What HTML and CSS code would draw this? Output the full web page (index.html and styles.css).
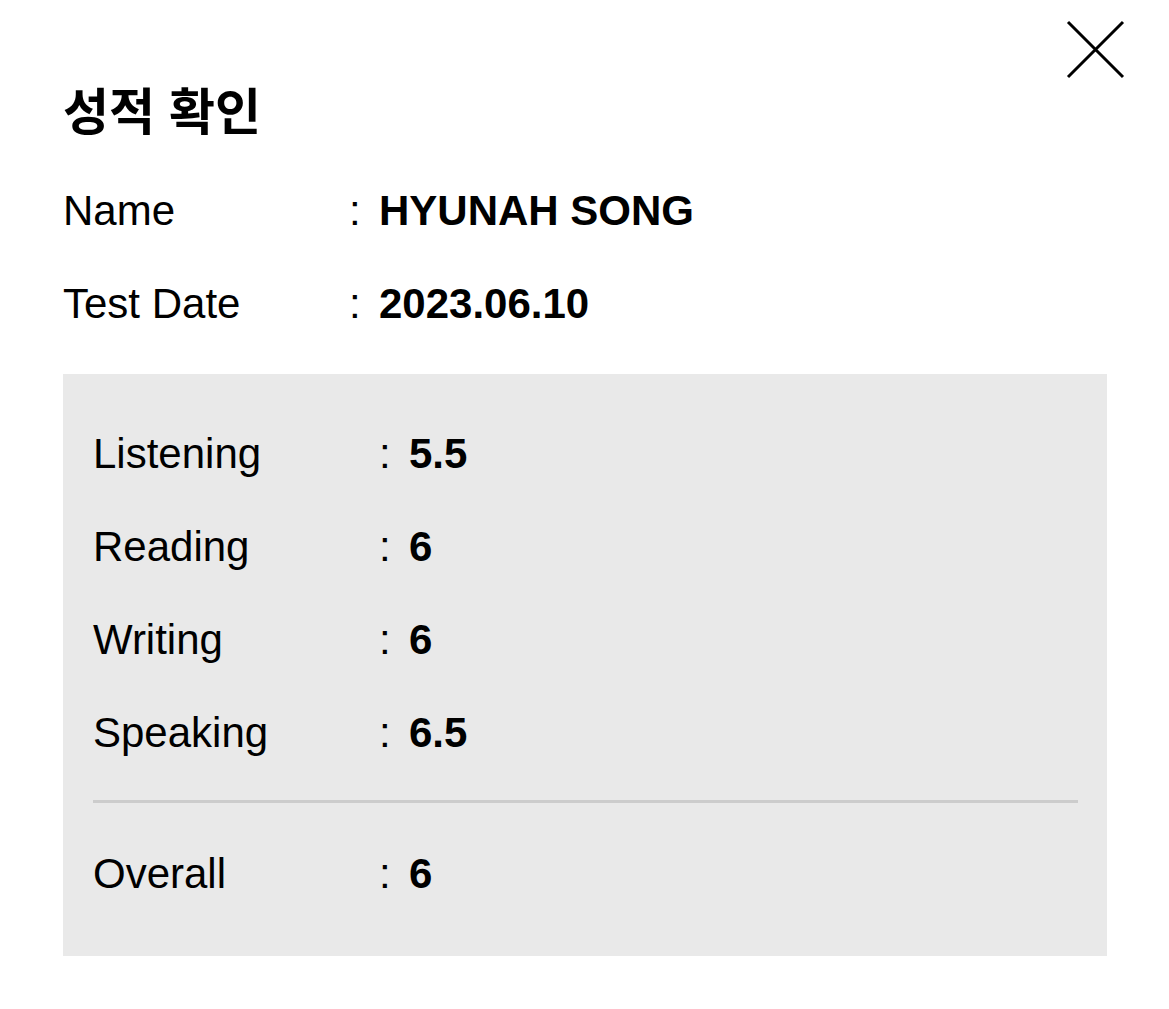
FILE: index.html
```html
<!DOCTYPE html>
<html lang="ko">
<head>
    <meta charset="UTF-8">
    <meta name="viewport" content="width=device-width, initial-scale=1.0">
    <title>성적 확인</title>
    <link rel="stylesheet" href="styles.css">
</head>
<body>

    <div class="modal">
        <button class="close" aria-label="닫기">
            <svg width="60" height="60" viewBox="0 0 60 60">
                <path d="M3 3 L58 58 M58 3 L3 58" stroke="#000" stroke-width="3" fill="none"/>
            </svg>
        </button>

        <h1>성적 확인</h1>

        <div class="info">
            <div class="row">
                <span class="label">Name</span>
                <span class="colon">:</span>
                <span class="value">HYUNAH SONG</span>
            </div>
            <div class="row">
                <span class="label">Test Date</span>
                <span class="colon">:</span>
                <span class="value">2023.06.10</span>
            </div>
        </div>

        <div class="scores">
            <div class="row">
                <span class="label">Listening</span>
                <span class="colon">:</span>
                <span class="value">5.5</span>
            </div>
            <div class="row">
                <span class="label">Reading</span>
                <span class="colon">:</span>
                <span class="value">6</span>
            </div>
            <div class="row">
                <span class="label">Writing</span>
                <span class="colon">:</span>
                <span class="value">6</span>
            </div>
            <div class="row">
                <span class="label">Speaking</span>
                <span class="colon">:</span>
                <span class="value">6.5</span>
            </div>
            <hr>
            <div class="row">
                <span class="label">Overall</span>
                <span class="colon">:</span>
                <span class="value">6</span>
            </div>
        </div>
    </div>

</body>
</html>
```

FILE: styles.css
```css
body {
    font-family: 'Liberation Sans', Arial, sans-serif;
    background-color: #fff;
    color: #000;
    margin: 0;
    padding: 0;
}
.modal {
    position: relative;
    padding: 73px 62px 0 63px;
}
.close {
    position: absolute;
    top: 19px;
    right: 44px;
    width: 60px;
    height: 60px;
    padding: 0;
    border: none;
    background: none;
    cursor: pointer;
}
.close svg {
    display: block;
}
h1 {
    font-family: 'Noto Sans CJK KR', sans-serif;
    font-size: 50px;
    font-weight: 700;
    line-height: 70px;
    margin: 0;
}
.info {
    margin-top: 21px;
    margin-bottom: 24px;
}
.row {
    display: flex;
    align-items: center;
    font-size: 42px;
    line-height: 93px;
}
.label {
    width: 286px;
}
.colon {
    width: 30px;
}
.value {
    font-weight: 700;
}
.scores {
    background-color: #e9e9e9;
    padding: 33px 29px 36px 30px;
}
.scores hr {
    border: none;
    height: 3px;
    background-color: #cccccc;
    margin: 21px 0 24px;
}
```
